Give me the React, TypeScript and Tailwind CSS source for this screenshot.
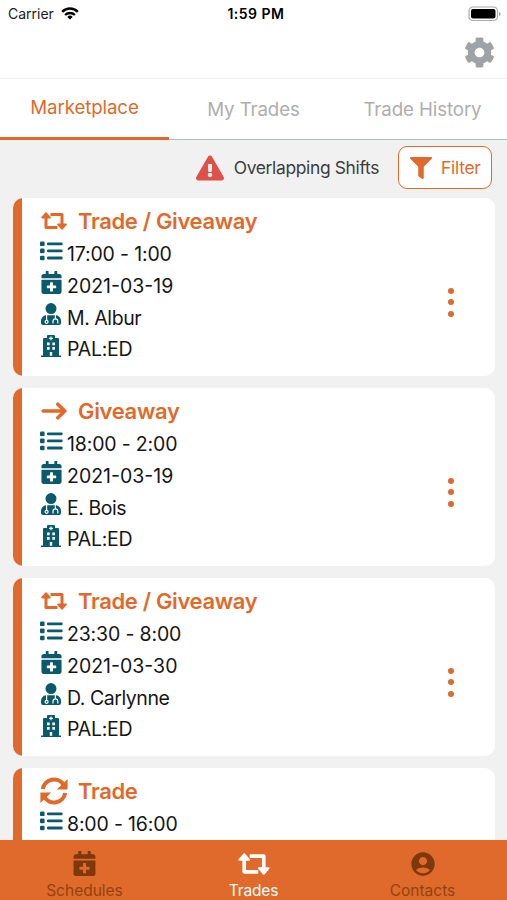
import type { ReactNode } from 'react';
import { FaCalendarPlus, FaFilter, FaExclamationTriangle, FaCog } from 'react-icons/fa';
import { MdAccountCircle } from 'react-icons/md';

type Kind = 'both' | 'giveaway' | 'trade';

const trades: { kind: Kind; title: string; time: string; date: string; name: string; unit: string }[] = [
  { kind: 'both', title: 'Trade / Giveaway', time: '17:00 - 1:00', date: '2021-03-19', name: 'M. Albur', unit: 'PAL:ED' },
  { kind: 'giveaway', title: 'Giveaway', time: '18:00 - 2:00', date: '2021-03-19', name: 'E. Bois', unit: 'PAL:ED' },
  { kind: 'both', title: 'Trade / Giveaway', time: '23:30 - 8:00', date: '2021-03-30', name: 'D. Carlynne', unit: 'PAL:ED' },
  { kind: 'trade', title: 'Trade', time: '8:00 - 16:00', date: '', name: '', unit: '' },
];

function SwapIcon({ className }: { className: string }) {
  return (
    <svg viewBox="0 0 26 18" className={className} fill="none" stroke="currentColor" strokeWidth="3" strokeLinejoin="round">
      <path d="M5 4.5V15.4H16.5M9.5 2.6H21V13.5" />
      <path d="M5 1L9 5.6H1ZM21 17L25 12.4H17Z" fill="currentColor" strokeWidth="1.6" />
    </svg>
  );
}

function ArrowIcon() {
  return (
    <svg viewBox="0 0 26 18" className="w-[26px] h-[18px]" fill="none" stroke="currentColor" strokeWidth="3.6" strokeLinecap="round" strokeLinejoin="round">
      <path d="M2.2 9H23.5M16.8 2.2L23.8 9L16.8 15.8" />
    </svg>
  );
}

function RefreshIcon() {
  return (
    <svg viewBox="0 0 28 28" className="w-[28px] h-[28px] shrink-0" fill="none" stroke="currentColor" strokeWidth="4.2">
      <path d="M2.8 12A11.3 11.3 0 0 1 23.6 8M25.2 16A11.3 11.3 0 0 1 4.4 20" />
      <path d="M27.6 2V12.4H16.8ZM.4 26V15.6H11.2Z" fill="currentColor" stroke="none" />
    </svg>
  );
}

function ListIcon() {
  return (
    <svg viewBox="0 0 23 20" className="w-[23px] h-[20px] shrink-0" fill="currentColor">
      <rect x="0" y="0.5" width="4.6" height="4.6" rx="1.2" />
      <rect x="0" y="7.6" width="4.6" height="4.6" rx="1.2" />
      <rect x="0" y="14.7" width="4.6" height="4.6" rx="1.2" />
      <rect x="7" y="1.4" width="15.6" height="2.8" rx="1" />
      <rect x="7" y="8.5" width="15.6" height="2.8" rx="1" />
      <rect x="7" y="15.6" width="15.6" height="2.8" rx="1" />
    </svg>
  );
}

function DoctorIcon() {
  return (
    <svg viewBox="0 0 20 22" className="w-[20px] h-[22px]" fill="currentColor">
      <circle cx="10" cy="5.6" r="5.5" />
      <path d="M5 12.2H15C18 12.4 20 15.2 20 18V20Q20 22 18 22H2Q0 22 0 20V18C0 15.2 2 12.4 5 12.2Z" />
      <g fill="none" stroke="#fff" strokeWidth="1.2">
        <circle cx="5.6" cy="18.8" r="1.5" />
        <path d="M5.6 12V17.2M14.4 12V15.6M12 20.4V18.2Q12 15.8 14.4 15.8T16.8 18.2V20.4" />
      </g>
    </svg>
  );
}

function HospitalIcon() {
  return (
    <svg viewBox="0 0 20 22" className="w-[20px] h-[22px]" fill="currentColor">
      <path d="M6 3V1Q6 0 7 0H13Q14 0 14 1V3H17Q18 3 18 4V20.5H20V22H0V20.5H2V4Q2 3 3 3Z" />
      <path d="M9.4 1.4H10.6V2.7H12V3.9H10.6V5.2H9.4V3.9H8V2.7H9.4ZM6 7.5H8.7V10.2H6ZM11.3 7.5H14V10.2H11.3ZM6 12H8.7V14.7H6ZM11.3 12H14V14.7H11.3ZM8.8 17H11.2V20.7H8.8Z" fill="#fff" />
    </svg>
  );
}

function KindIcon({ kind }: { kind: Kind }) {
  if (kind === 'both') return <SwapIcon className="w-[26px] h-[18px]" />;
  if (kind === 'giveaway') return <ArrowIcon />;
  return <RefreshIcon />;
}

function Row({ icon, className = 'tracking-normal', children }: { icon: ReactNode; className?: string; children: ReactNode }) {
  return (
    <div className="flex h-[31.75px] items-center">
      <span className="flex w-[22px] mr-[5px] -mt-[8px] justify-center text-[#0b5a6b]">{icon}</span>
      <span className={`text-[19.5px] leading-none text-[#161616] ${className}`}>{children}</span>
    </div>
  );
}

export default function App() {
  return (
    <div className="flex h-[900px] w-[507px] flex-col overflow-hidden bg-[#f1f1f1] font-['Inter','Liberation_Sans',sans-serif]">
      <header className="h-[79px] shrink-0 border-b border-[#f3f3f3] bg-white">
        <div className="grid h-[27px] grid-cols-3 items-center pl-[8px] pr-[6px] text-[14px] text-[#1a1a1a]">
          <div className="flex items-center gap-[7px]">
            <span>Carrier</span>
            <svg viewBox="0 0 18 13" className="w-[18px] h-[13px]" fill="none" stroke="#000" strokeWidth="2.4">
              <path d="M1.2 4.8A11 11 0 0 1 16.8 4.8M4.1 8A7 7 0 0 1 13.9 8" />
              <path d="M9 12.6L6.3 9.9A3.8 3.8 0 0 1 11.7 9.9Z" fill="#000" stroke="none" />
            </svg>
          </div>
          <span className="pl-[3px] text-center font-semibold tracking-[0.5px] text-black">1:59 PM</span>
          <svg viewBox="0 0 33 16" className="ml-auto w-[33px] h-[16px]">
            <rect x="1" y="1" width="28.5" height="13.5" rx="4" fill="#fff" stroke="#aaa" strokeWidth="1.2" />
            <rect x="3" y="3" width="24.5" height="9.5" rx="2" fill="#000" />
            <path d="M31 6v4q1.5-.5 1.5-2T31 6" fill="#999" />
          </svg>
        </div>
        <div className="flex justify-end pr-[12px] pt-[10px]">
          <FaCog className="w-[31px] h-[31px] text-[#a0a3a6]" />
        </div>
      </header>

      <nav className="grid h-[61px] shrink-0 grid-cols-3 bg-white text-center text-[18.7px] text-[#aeaeae]">
        <div className="border-b-[3px] border-[#df6a2b] pt-[15px] tracking-[-0.1px] text-[#df6a2b]">Marketplace</div>
        <div className="border-b border-[#b5baba] pt-[17px] tracking-[-0.1px]">My Trades</div>
        <div className="border-b border-[#b5baba] pt-[17px] tracking-[-0.1px]">Trade History</div>
      </nav>

      <div className="flex h-[57px] shrink-0 items-center justify-end pr-[15px] pb-[2px]">
        <FaExclamationTriangle className="w-[28px] h-[26px] text-[#df5048]" />
        <span className="ml-[10px] pt-px text-[17.4px] tracking-[-0.33px] text-[#3c3c3c]">Overlapping Shifts</span>
        <button className="ml-[19px] flex h-[43px] w-[94px] items-center rounded-[9px] border border-[#df6a2b] bg-white pl-[11px] text-[17.4px] text-[#df6a2b]">
          <FaFilter className="w-[22px] h-[22px]" />
          <span className="ml-[9px] pt-px tracking-[-0.25px]">Filter</span>
        </button>
      </div>

      <main className="flex min-h-0 flex-1 flex-col gap-[12px] overflow-hidden pl-[13px] pr-[12px] pt-px">
        {trades.map((t, i) => (
          <section key={i} className="flex h-[178px] shrink-0 overflow-hidden rounded-[10px] bg-white">
            <div className="w-[9px] shrink-0 bg-[#df6a2b]" />
            <div className="flex-1 pl-[18px] pt-[6px]">
              <div className="mb-px flex h-[34px] items-center text-[#df6a2b]">
                <span className="flex w-[28px] justify-center"><KindIcon kind={t.kind} /></span>
                <h2 className="ml-[10px] text-[22px] font-semibold leading-none tracking-[-0.34px]">{t.title}</h2>
              </div>
              <Row icon={<ListIcon />} className="tracking-[-0.16px]">{t.time}</Row>
              {t.date && (
                <>
                  <Row icon={<FaCalendarPlus className="w-[21px] h-[23px]" />}>{t.date}</Row>
                  <Row icon={<DoctorIcon />} className="tracking-[-0.45px]">{t.name}</Row>
                  <Row icon={<HospitalIcon />} className="tracking-[-0.25px]">{t.unit}</Row>
                </>
              )}
            </div>
            <button className="mr-[41px] mt-[30px] flex flex-col items-center justify-center gap-[5.5px]" aria-label="More">
              <i className="h-[6px] w-[6px] rounded-full bg-[#df6a2b]" />
              <i className="h-[6px] w-[6px] rounded-full bg-[#df6a2b]" />
              <i className="h-[6px] w-[6px] rounded-full bg-[#df6a2b]" />
            </button>
          </section>
        ))}
      </main>

      <footer className="grid h-[60px] shrink-0 grid-cols-3 bg-[#df6a2b] text-[15.5px] leading-[18px] text-[#94430f]">
        <div className="flex flex-col items-center">
          <FaCalendarPlus className="mt-[11px] w-[25px] h-[25px] text-[#7f370c]" />
          <span className="mt-[6px]">Schedules</span>
        </div>
        <div className="flex flex-col items-center text-white">
          <SwapIcon className="mt-[13px] w-[32px] h-[22px]" />
          <span className="mt-[7px] tracking-[-0.15px]">Trades</span>
        </div>
        <div className="flex flex-col items-center">
          <MdAccountCircle className="mt-[10px] w-[28px] h-[28px] text-[#7f370c]" />
          <span className="mt-[4px]">Contacts</span>
        </div>
      </footer>
    </div>
  );
}
